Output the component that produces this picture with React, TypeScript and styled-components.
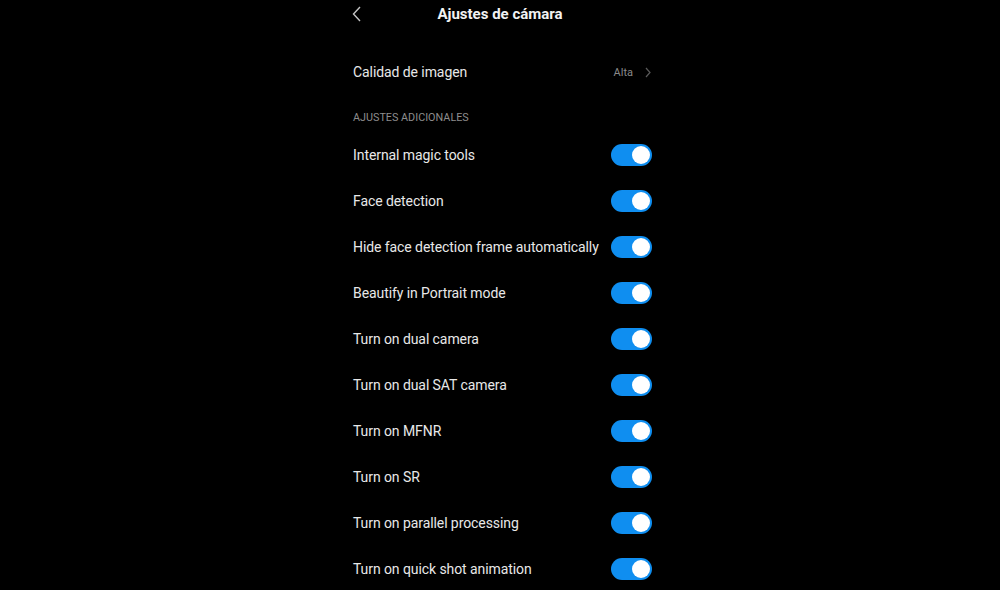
import React from "react";
import styled, { createGlobalStyle } from "styled-components";

const Global = createGlobalStyle`
  html, body { margin: 0; padding: 0; background: #000; }
  body { font-family: Roboto, "Noto Sans", Arial, sans-serif; -webkit-font-smoothing: antialiased; }
`;

const Page = styled.div`
  width: 1000px;
  height: 590px;
  background: #000;
  overflow: hidden;
`;

const Screen = styled.div`
  width: 299px;
  margin-left: 353px;
  display: flex;
  flex-direction: column;
`;

const Header = styled.div`
  height: 28px;
  display: grid;
  grid-template-columns: 40px 1fr 40px;
  align-items: center;
`;

const Back = styled.div`
  display: flex;
  align-items: center;
  height: 28px;
  margin-left: -1px;
`;

const Title = styled.div`
  text-align: center;
  color: #f2f2f2;
  font-size: 15px;
  font-weight: 700;
  margin-left: -5px;
`;

const Row = styled.div<{ $top?: number }>`
  height: 46px;
  display: flex;
  align-items: center;
  justify-content: space-between;
  margin-top: ${(p) => p.$top ?? 0}px;
`;

const Label = styled.span`
  color: #e8e8e8;
  font-size: 14px;
  letter-spacing: -0.08px;
`;

const Value = styled.div`
  display: flex;
  align-items: center;
  gap: 12px;
  color: #8a8a8a;
  font-size: 11px;
  padding-right: 1px;
`;

const Section = styled.div`
  margin-top: 13px;
  margin-bottom: 4px;
  height: 20px;
  line-height: 20px;
  color: #8d8d8d;
  font-size: 10.8px;
`;

const Track = styled.div<{ $on: boolean }>`
  width: 41px;
  height: 22px;
  border-radius: 11px;
  background: ${(p) => (p.$on ? "#0f8ef0" : "#444")};
  display: flex;
  align-items: center;
  justify-content: ${(p) => (p.$on ? "flex-end" : "flex-start")};
  padding: 0 2px;
  box-sizing: border-box;
`;

const Knob = styled.div`
  width: 18px;
  height: 18px;
  border-radius: 50%;
  background: #fff;
`;

const Toggle = ({ on }: { on: boolean }) => (
  <Track $on={on}>
    <Knob />
  </Track>
);

const items = [
  "Internal magic tools",
  "Face detection",
  "Hide face detection frame automatically",
  "Beautify in Portrait mode",
  "Turn on dual camera",
  "Turn on dual SAT camera",
  "Turn on MFNR",
  "Turn on SR",
  "Turn on parallel processing",
  "Turn on quick shot animation",
];

export default function App() {
  return (
    <Page>
      <Global />
      <Screen>
        <Header>
          <Back>
            <svg width="10" height="16" viewBox="0 0 10 16">
              <path d="M8 1 L1.5 8 L8 15" stroke="#c4c4c4" strokeWidth="1.4" fill="none" />
            </svg>
          </Back>
          <Title>Ajustes de cámara</Title>
          <span />
        </Header>
        <Row $top={21}>
          <Label>Calidad de imagen</Label>
          <Value>
            Alta
            <svg width="6" height="11" viewBox="0 0 6 11">
              <path d="M1 1 L5 5.5 L1 10" stroke="#5a5a5a" strokeWidth="1.2" fill="none" />
            </svg>
          </Value>
        </Row>
        <Section>AJUSTES ADICIONALES</Section>
        {items.map((t) => (
          <Row key={t}>
            <Label>{t}</Label>
            <Toggle on />
          </Row>
        ))}
      </Screen>
    </Page>
  );
}
